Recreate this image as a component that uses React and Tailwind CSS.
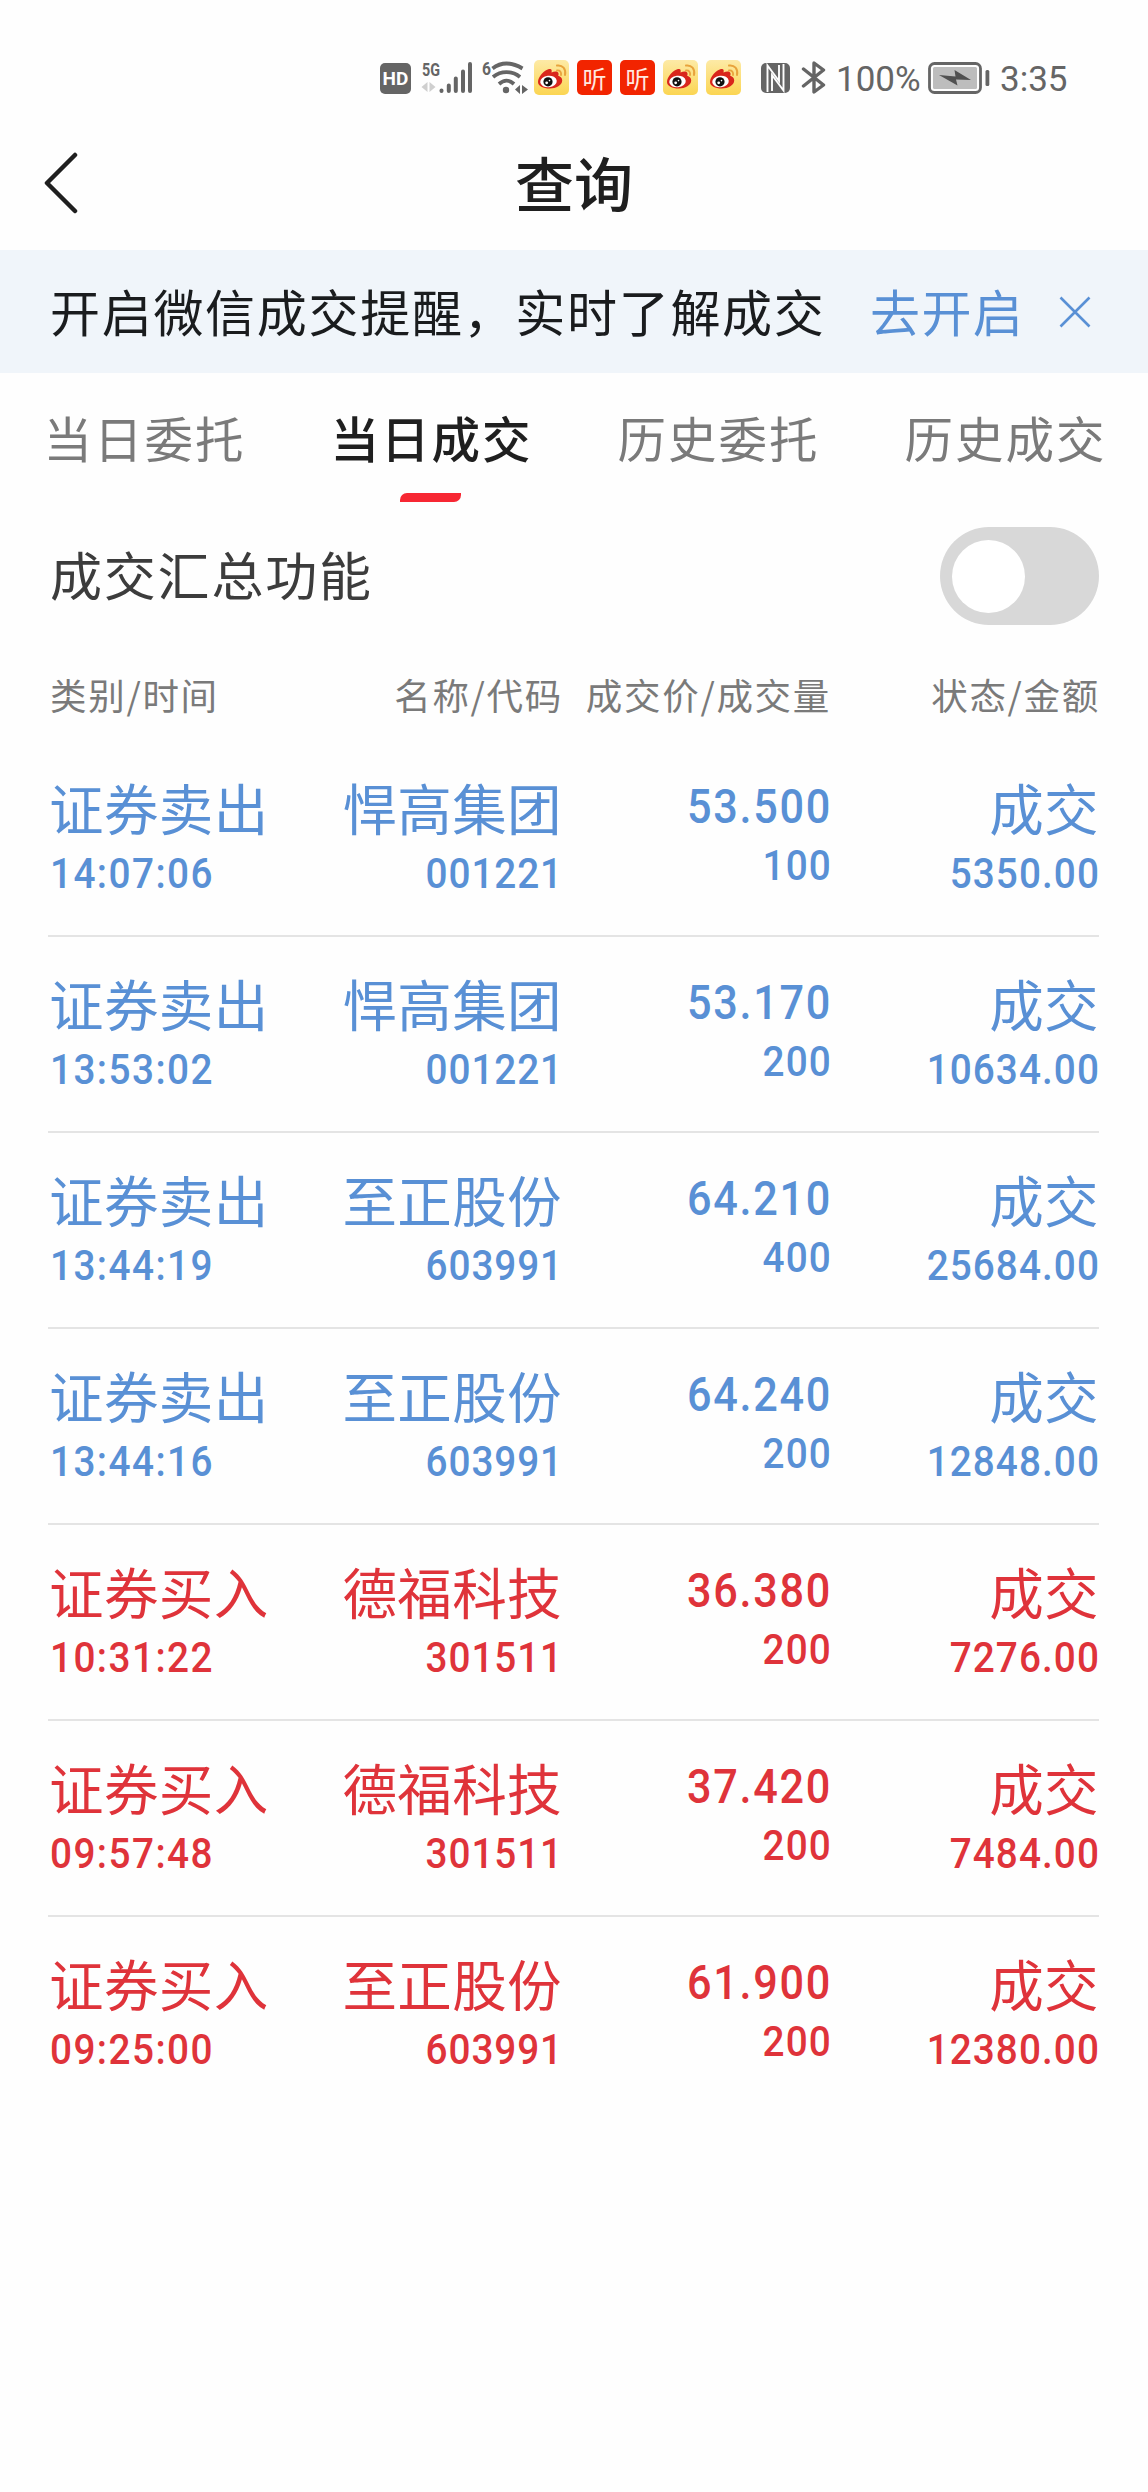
import React, { useState } from 'react'

const records = [
  { type: 'sell', time: '14:07:06', name: '悍高集团', code: '001221', price: '53.500', qty: '100', amount: '5350.00' },
  { type: 'sell', time: '13:53:02', name: '悍高集团', code: '001221', price: '53.170', qty: '200', amount: '10634.00' },
  { type: 'sell', time: '13:44:19', name: '至正股份', code: '603991', price: '64.210', qty: '400', amount: '25684.00' },
  { type: 'sell', time: '13:44:16', name: '至正股份', code: '603991', price: '64.240', qty: '200', amount: '12848.00' },
  { type: 'buy', time: '10:31:22', name: '德福科技', code: '301511', price: '36.380', qty: '200', amount: '7276.00' },
  { type: 'buy', time: '09:57:48', name: '德福科技', code: '301511', price: '37.420', qty: '200', amount: '7484.00' },
  { type: 'buy', time: '09:25:00', name: '至正股份', code: '603991', price: '61.900', qty: '200', amount: '12380.00' }
]

const tabs = ['当日委托', '当日成交', '历史委托', '历史成交']

const WeiboIcon = () => (
  <svg viewBox="0 0 35 35" className="w-[35px] h-[35px]">
    <defs>
      <linearGradient id="weibo" x1="0" y1="0" x2="0" y2="1">
        <stop offset="0" stopColor="#fdeaa6" />
        <stop offset="1" stopColor="#fbd552" />
      </linearGradient>
    </defs>
    <rect width="35" height="35" rx="5" fill="url(#weibo)" />
    <path d="M4 22c0-5 6-12 11-13 3-.6 3 1.500 2.500 3.500 3-1.200 6.500-1.500 7 .8.200 1 0 1.800-.3 2.500 2.500.8 4 2.400 4 4.700 0 4.500-6 8-12.500 8S4 26 4 22z" fill="#d9261c" />
    <ellipse cx="14.500" cy="21.500" rx="8.300" ry="5.800" fill="#fff" transform="rotate(-6 14.500 21.500)" />
    <circle cx="14" cy="21.800" r="4.600" fill="#111" />
    <circle cx="12.700" cy="22.800" r="1.400" fill="#fff" />
    <circle cx="15.500" cy="20.600" r=".8" fill="#fff" />
    <path d="M23 10.500c3-.4 4.600 1.700 4 4.500" fill="none" stroke="#e8a33c" strokeWidth="1.800" strokeLinecap="round" />
    <path d="M23 5.500c5.500-.8 9.300 3.500 8 9.500" fill="none" stroke="#e8a33c" strokeWidth="2" strokeLinecap="round" />
  </svg>
)

const ListenIcon = () => (
  <div className="w-[35px] h-[35px] rounded-[5px] bg-[#f22400] flex items-center justify-center">
    <span className="text-[24px] leading-none text-[#ffe9e0]">听</span>
  </div>
)

const StatusBar = () => (
  <div className="h-[128px] pt-[60px] pl-[380px] flex items-start">
    <div className="w-[31px] h-[31px] mt-[3px] rounded-[5px] bg-[#656565] flex items-center justify-center">
      <span className="font-[Roboto] font-bold text-[19px] leading-none text-white">HD</span>
    </div>
    <svg viewBox="0 0 54 36" className="w-[54px] h-[36px] ml-[9px]">
      <text x="2" y="15.500" fontFamily="Roboto" fontWeight="700" fontSize="18.500" textLength="18" lengthAdjust="spacingAndGlyphs" fill="#656565">5G</text>
      <path d="M7.500 22v10l-6-5zM9.500 22v10l6-5z" fill="#cfcfcf" />
      <g stroke="#656565" strokeWidth="4" strokeLinecap="round">
        <path d="M21.500 30.500v.5M28.800 25.500v5.500M35.800 18.500v12.500M43 11.500v19.500M50 4v27" />
      </g>
    </svg>
    <svg viewBox="-1 0 48 36" className="w-[48px] h-[36px] ml-[7px] overflow-visible">
      <text x="0" y="15" fontFamily="Roboto" fontWeight="700" fontSize="19" textLength="9" lengthAdjust="spacingAndGlyphs" fill="#656565">6</text>
      <g fill="none" stroke="#656565" strokeWidth="3.800">
        <path d="M10.500 8.500c8.500-6.500 19-6.500 30 0M11 17c8-6.500 19-6.500 27 0M17 24c5-4.500 10-4.500 15 0" />
      </g>
      <circle cx="24" cy="30" r="3.200" fill="#656565" />
      <path d="M38 25v9l-5-4.500zM40 25v9l6-4.500z" fill="#656565" />
    </svg>
    <div className="flex gap-[8px] ml-[5px]">
      <WeiboIcon />
      <ListenIcon />
      <ListenIcon />
      <WeiboIcon />
      <WeiboIcon />
    </div>
    <svg viewBox="0 0 29 30" className="w-[29px] h-[30px] ml-[20px] mt-[3px]">
      <rect width="29" height="30" rx="5" fill="#656565" />
      <path d="M6.500 29V2.500L18 18V2M11 28V12l11.500 15.500V1" fill="none" stroke="#fefefe" strokeWidth="1.900" />
    </svg>
    <svg viewBox="0 0 26 34" className="w-[26px] h-[34px] ml-[11px]">
      <path d="M2.500 9l20 16-9.500 7V3l9.500 7-20 16" fill="none" stroke="#656565" strokeWidth="3.400" strokeLinejoin="round" strokeLinecap="round" />
    </svg>
    <span className="w-[86px] ml-[9px] mt-[3px] font-[Roboto] text-[35px] leading-[33px] text-[#656565] whitespace-nowrap">100%</span>
    <svg viewBox="0 0 64 34" className="w-[64px] h-[34px] ml-[6px] mt-px">
      <rect x="1.500" y="2.500" width="51" height="29" rx="5" fill="none" stroke="#656565" strokeWidth="2.800" />
      <rect x="5" y="6" width="44" height="22" rx="1.500" fill="#bdbdbd" />
      <path d="M11 14l16.500 1.500L26.500 9 43 19l-15-.5 1.500 6z" fill="#505050" />
      <rect x="57.500" y="9" width="3.800" height="16" rx="1.500" fill="#656565" />
    </svg>
    <span className="ml-[8px] mt-[3px] font-[Roboto] text-[35px] leading-[33px] text-[#656565] whitespace-nowrap">3:35</span>
  </div>
)

const TitleBar = () => (
  <div className="h-[122px] grid grid-cols-3 items-start px-[44px]">
    <svg viewBox="0 0 34 62" className="w-[34px] h-[62px] mt-[24px]">
      <path d="M31 3L3 31l28 28" fill="none" stroke="#1f1f1f" strokeWidth="4.500" strokeLinecap="round" strokeLinejoin="round" />
    </svg>
    <h1 className="mt-[14px] text-center text-[59px] leading-[80px] font-medium text-[#1f1f1f]">查询</h1>
  </div>
)

const Banner = () => (
  <div className="h-[123px] bg-[#f0f5fa] flex items-center pl-[50px] text-[50px] leading-[70px]">
    <span className="-mt-[3px] w-[820px] tracking-[1.7px] text-[#1a1c1e] whitespace-nowrap">开启微信成交提醒，实时了解成交</span>
    <span className="-mt-[3px] w-[151px] tracking-[1.4px] text-[#5990d5] whitespace-nowrap">去开启</span>
    <svg viewBox="0 0 32 32" className="w-[32px] h-[32px] ml-[38px]">
      <path d="M1.500 1.500l29 29M30.500 1.500l-29 29" stroke="#5990d5" strokeWidth="2.600" />
    </svg>
  </div>
)

const App = () => {
  const [activeTab, setActiveTab] = useState(1)
  const [summary, setSummary] = useState(false)

  return (
    <div className="w-[1148px] h-[2492px] bg-[#fefefe] overflow-hidden font-['Noto_Sans_CJK_SC',sans-serif]">
      <StatusBar />
      <TitleBar />
      <Banner />

      {/* Tabs */}
      <div className="grid grid-cols-4 h-[129px]">
        {tabs.map((tab, i) => (
          <button
            key={tab}
            onClick={() => setActiveTab(i)}
            className={`flex flex-col items-center pt-[29px] text-[48.5px] leading-[70px] whitespace-nowrap ${
              activeTab === i ? 'font-medium text-[#1f1f1f]' : 'text-[#7a7a7a]'
            }`}
          >
            <span className="pl-[2px] tracking-[2px]">{tab}</span>
            {activeTab === i && (
              <span className="w-[61px] h-[9px] mt-[21px] rounded-tl-[7px] rounded-br-[7px] bg-[#f72733]"></span>
            )}
          </button>
        ))}
      </div>

      {/* Summary switch */}
      <div className="h-[148px] pl-[50px] pr-[49px] pt-[25px] flex items-start justify-between">
        <span className="mt-[12px] text-[52px] leading-[70px] tracking-[1.8px] text-[#3c3c3c]">成交汇总功能</span>
        <button
          onClick={() => setSummary(!summary)}
          className={`w-[159px] h-[98px] px-[12px] rounded-full flex items-center ${
            summary ? 'justify-end bg-[#f72733]' : 'bg-[#d8d8d8]'
          }`}
        >
          <span className="w-[73px] h-[73px] rounded-full bg-white"></span>
        </button>
      </div>

      {/* Table header */}
      <div className="h-[91px] pl-[50px] pr-[48px] pt-[20px] grid grid-cols-[220px_293px_268px_269px] text-[36.5px] leading-[50px] tracking-[1.7px] text-[#7a7a7a] whitespace-nowrap">
        <span>类别/时间</span>
        <span className="text-right">名称/代码</span>
        <span className="text-right">成交价/成交量</span>
        <span className="text-right">状态/金额</span>
      </div>

      {/* Records */}
      <div className="ml-[48px] mr-[49px]">
        {records.map((r, i) => (
          <div
            key={i}
            className={`h-[196px] pt-[28px] pl-[2px] grid grid-cols-[220px_292px_268px_269px] text-[54.5px] leading-[76px] whitespace-nowrap ${
              r.type === 'sell' ? 'text-[#5990d5]' : 'text-[#df333a]'
            } ${i < records.length - 1 ? 'border-b-2 border-[#e4e4e4]' : ''}`}
          >
            <div>
              <p className="-ml-px tracking-[0.4px]">{r.type === 'sell' ? '证券卖出' : '证券买入'}</p>
              <p className="mt-[3px] origin-left scale-x-90 font-[Roboto] font-medium text-[43px] leading-[50px] tracking-[1.6px]">{r.time}</p>
            </div>
            <div className="text-right">
              <p className="tracking-[0.4px]">{r.name}</p>
              <p className="mt-[3px] -mr-px origin-right scale-x-90 font-[Roboto] font-medium text-[43px] leading-[50px] tracking-[1px]">{r.code}</p>
            </div>
            <div className="text-right font-[Roboto] font-medium">
              <p className="pt-[8px] -mr-[2px] origin-right scale-x-90 text-[48px] leading-[60px] tracking-[1.9px]">{r.price}</p>
              <p className="mt-[3px] -mr-[2px] origin-right scale-x-90 text-[43px] leading-[50px] tracking-[1.3px]">{r.qty}</p>
            </div>
            <div className="text-right">
              <p className="tracking-[0.4px]">成交</p>
              <p className="mt-[3px] -mr-px origin-right scale-x-90 font-[Roboto] font-medium text-[43px] leading-[50px] tracking-[1.2px]">{r.amount}</p>
            </div>
          </div>
        ))}
      </div>
    </div>
  )
}

export default App
